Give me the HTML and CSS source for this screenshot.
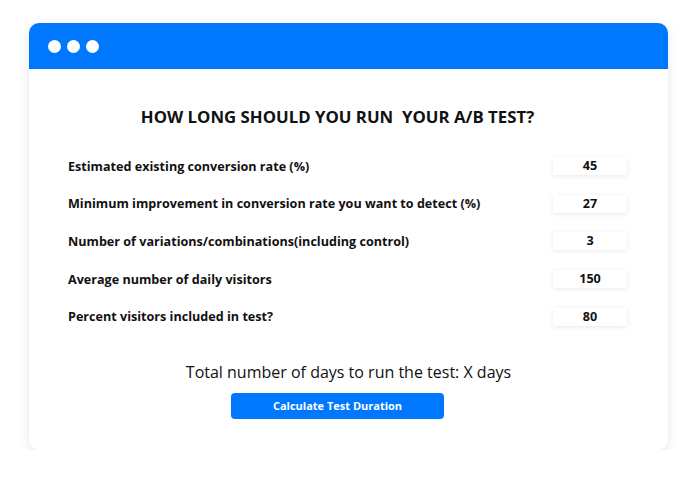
FILE: index.html
```html
<!DOCTYPE html>
<html>
<head>
<meta charset="utf-8">
<link rel="stylesheet" href="styles.css">
</head>
<body>
<div class="card">
  <div class="titlebar">
    <span class="dot"></span><span class="dot"></span><span class="dot"></span>
  </div>
  <div class="content">
    <h1 class="title">HOW LONG SHOULD YOU RUN &nbsp;YOUR A/B TEST?</h1>
    <div class="rows">
      <div class="row"><span class="label">Estimated existing conversion rate (%)</span><span class="field">45</span></div>
      <div class="row"><span class="label">Minimum improvement in conversion rate you want to detect (%)</span><span class="field">27</span></div>
      <div class="row"><span class="label">Number of variations/combinations(including control)</span><span class="field">3</span></div>
      <div class="row"><span class="label">Average number of daily visitors</span><span class="field">150</span></div>
      <div class="row"><span class="label">Percent visitors included in test?</span><span class="field">80</span></div>
    </div>
    <p class="total">Total number of days to run the test: X days</p>
    <div class="actions"><button class="btn">Calculate Test Duration</button></div>
  </div>
</div>
</body>
</html>
```
FILE: styles.css
```css
html, body {
  margin: 0;
  padding: 0;
  background: #ffffff;
  font-family: "Open Sans", "Liberation Sans", sans-serif;
  color: #111111;
}
.card {
  margin: 23px 0 0 29px;
  width: 639px;
  height: 427px;
  background: #ffffff;
  border-radius: 10px;
  box-shadow: 0 3px 12px rgba(0, 0, 0, 0.1);
  overflow: hidden;
}
.titlebar {
  height: 46px;
  background: #0077ff;
  display: flex;
  align-items: center;
  gap: 6px;
  padding-left: 19px;
}
.dot {
  width: 13px;
  height: 13px;
  border-radius: 50%;
  background: #ffffff;
}
.content {
  padding: 0 41px 0 39px;
}
.title {
  margin: 37px 0 0 0;
  padding-right: 20px;
  font-size: 16.8px;
  line-height: 22px;
  font-weight: 700;
  text-align: center;
  white-space: pre;
}
.rows {
  margin-top: 29px;
  display: flex;
  flex-direction: column;
  gap: 19.7px;
}
.row {
  display: flex;
  justify-content: space-between;
  align-items: center;
  height: 18px;
}
.label {
  font-size: 12.6px;
  font-weight: 700;
}
.field {
  width: 74px;
  height: 18px;
  line-height: 18px;
  text-align: center;
  font-size: 12.6px;
  font-weight: 700;
  background: #ffffff;
  box-shadow: 0 1px 5px rgba(0, 0, 0, 0.09);
}
.total {
  margin: 35px 0 0 0;
  padding-left: 2px;
  font-size: 16px;
  line-height: 22px;
  text-align: center;
}
.actions {
  margin-top: 10px;
  padding-right: 20px;
  display: flex;
  justify-content: center;
}
.btn {
  width: 213px;
  height: 26px;
  border: none;
  border-radius: 4px;
  background: #0077ff;
  color: #ffffff;
  font-family: "Open Sans", "Liberation Sans", sans-serif;
  font-size: 11px;
  font-weight: 700;
  padding: 0;
}
```
